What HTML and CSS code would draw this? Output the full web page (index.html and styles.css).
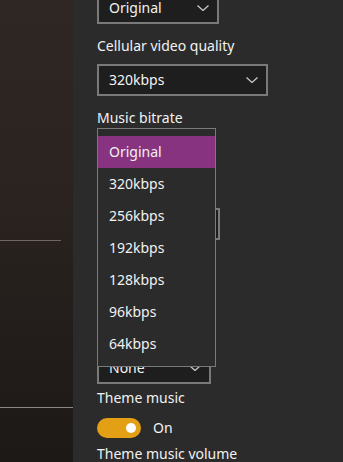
FILE: index.html
```html
<!DOCTYPE html>
<html>
<head>
<meta charset="utf-8">
<link rel="stylesheet" href="styles.css">
</head>
<body>
<div class="app">
  <aside class="side">
    <div class="sep sep-short"></div>
    <div class="sep sep-full"></div>
  </aside>
  <main class="settings">
    <div class="combo w122"><span>Original</span><svg class="chev" viewBox="0 0 12 6"><path d="M0.5 0.5 L6 5.5 L11.5 0.5" /></svg></div>
    <div class="label">Cellular video quality</div>
    <div class="combo w171"><span>320kbps</span><svg class="chev" viewBox="0 0 12 6"><path d="M0.5 0.5 L6 5.5 L11.5 0.5" /></svg></div>
    <div class="label">Music bitrate</div>
    <div class="combo w110"><span class="covered">Original</span><svg class="chev" viewBox="0 0 12 6"><path d="M0.5 0.5 L6 5.5 L11.5 0.5" /></svg></div>
    <div class="label covered">Cellular</div>
    <div class="combo w123"><span class="covered">320kbps</span><svg class="chev" viewBox="0 0 12 6"><path d="M0.5 0.5 L6 5.5 L11.5 0.5" /></svg></div>
    <div class="label covered">Download</div>
    <div class="combo w110"><span class="covered">Original</span><svg class="chev" viewBox="0 0 12 6"><path d="M0.5 0.5 L6 5.5 L11.5 0.5" /></svg></div>
    <div class="label covered">Subtitles</div>
    <div class="combo w114"><span>None</span><svg class="chev" viewBox="0 0 12 6"><path d="M0.5 0.5 L6 5.5 L11.5 0.5" /></svg></div>
    <div class="label label-tight">Theme music</div>
    <div class="toggle-row">
      <div class="toggle"><div class="knob"></div></div>
      <span class="toggle-text">On</span>
    </div>
    <div class="label label-last">Theme music volume</div>

    <ul class="popup">
      <li class="item selected">Original</li>
      <li class="item">320kbps</li>
      <li class="item">256kbps</li>
      <li class="item">192kbps</li>
      <li class="item">128kbps</li>
      <li class="item">96kbps</li>
      <li class="item">64kbps</li>
    </ul>
  </main>
</div>
</body>
</html>
```
FILE: styles.css
```css
html, body {
  margin: 0;
  padding: 0;
  width: 343px;
  height: 462px;
  overflow: hidden;
  background: #2b2b2b;
  font-family: "Noto Sans", "Open Sans", sans-serif;
  font-size: 14px;
  color: #f2f2f2;
}

.app {
  display: flex;
  height: 462px;
}

.side {
  width: 73px;
  flex: none;
  background: linear-gradient(180deg, #2e2723 0%, #2a231f 45%, #221d1b 75%, #1d1917 100%);
  display: flex;
  flex-direction: column;
}

.sep {
  height: 1px;
  background: #6e6660;
}

.sep-short {
  width: 61px;
  margin-top: 240px;
}

.sep-full {
  width: 73px;
  margin-top: 166px;
  background: #8a8684;
}

.settings {
  flex: 1;
  position: relative;
  padding-left: 24px;
  margin-top: -8px;
  display: flex;
  flex-direction: column;
  align-items: flex-start;
}

.combo {
  box-sizing: border-box;
  height: 32px;
  border: 2px solid #7a7a7a;
  background: #1e1e1e;
  display: flex;
  align-items: center;
  justify-content: space-between;
  padding: 0 8px 0 10px;
  flex: none;
}

.combo span {
  line-height: 20px;
  color: #f2f2f2;
}

.covered {
  visibility: hidden;
}

.chev {
  width: 12px;
  height: 6px;
  margin-top: -1px;
  fill: none;
  stroke: #c8c8c8;
  stroke-width: 1.3;
}

.w122 { width: 122px; }
.w171 { width: 171px; }
.w110 { width: 110px; }
.w123 { width: 123px; }
.w114 { width: 114px; }

.label {
  line-height: 20px;
  padding-top: 12px;
  padding-bottom: 8px;
  white-space: nowrap;
}

.label-tight {
  padding-top: 4px;
  padding-bottom: 0;
}

.label-last {
  padding-top: 6px;
  padding-bottom: 0;
}

.toggle-row {
  display: flex;
  align-items: center;
  margin-top: 10px;
  height: 20px;
}

.toggle {
  box-sizing: border-box;
  width: 44px;
  height: 20px;
  border-radius: 10px;
  background: #e3a014;
  display: flex;
  align-items: center;
  justify-content: flex-end;
  padding-right: 5px;
}

.knob {
  width: 10px;
  height: 10px;
  border-radius: 50%;
  background: #ffffff;
}

.toggle-text {
  margin-left: 12px;
  line-height: 20px;
}

.popup {
  position: absolute;
  left: 24px;
  top: 136px;
  margin: 0;
  padding: 7px 0;
  list-style: none;
  box-sizing: border-box;
  width: 119px;
  height: 239px;
  background: #2b2b2b;
  border: 1px solid #7a7a7a;
}

.item {
  height: 32px;
  line-height: 32px;
  padding-left: 11px;
  color: #f2f2f2;
}

.item.selected {
  background: #87337f;
}
```
